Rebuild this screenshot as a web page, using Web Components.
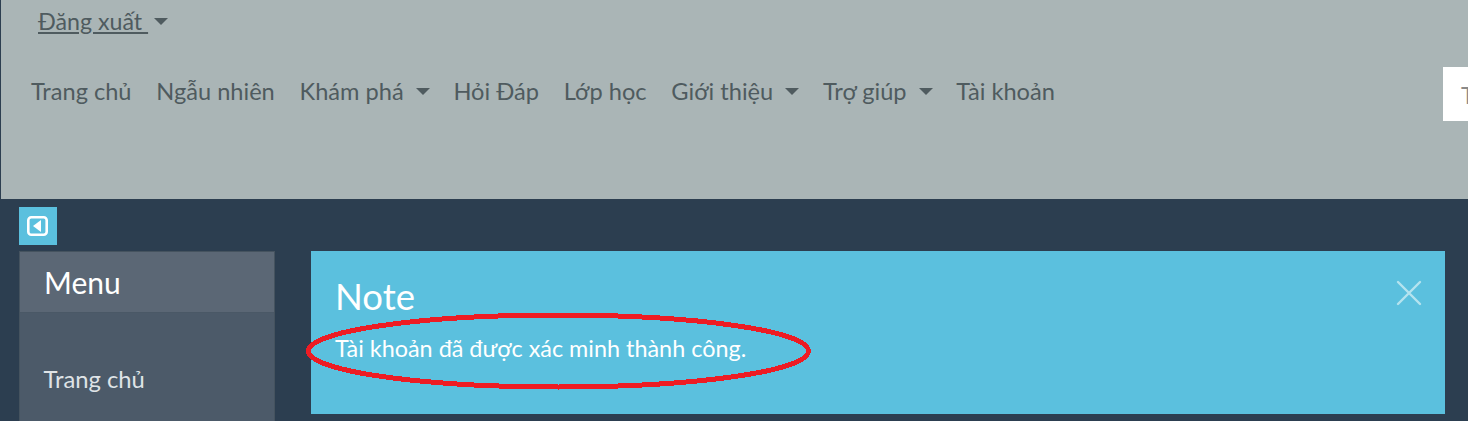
<!DOCTYPE html>
<html lang="vi">
<head>
<meta charset="utf-8">
<title>Note</title>
<style>
  html, body {
    margin: 0;
    height: 421px;
    overflow: hidden;
    background-color: #2c3e50;
    font-family: Lato, "Noto Sans", sans-serif;
  }
</style>
</head>
<body>
<site-header>
  <nav-link slot="top" caret underline>Đăng xuất </nav-link>
  <nav-link slot="nav">Trang chủ</nav-link>
  <nav-link slot="nav">Ngẫu nhiên</nav-link>
  <nav-link slot="nav" caret>Khám phá</nav-link>
  <nav-link slot="nav">Hỏi Đáp</nav-link>
  <nav-link slot="nav">Lớp học</nav-link>
  <nav-link slot="nav" caret>Giới thiệu</nav-link>
  <nav-link slot="nav" caret>Trợ giúp</nav-link>
  <nav-link slot="nav">Tài khoản</nav-link>
</site-header>
<page-body>
  <side-menu slot="side" heading="Menu">
    <span>Trang chủ</span>
  </side-menu>
  <note-box heading="Note">Tài khoản đã được xác minh thành công.</note-box>
</page-body>

<script>
  // Header with the logout row, the main nav and the clipped search box.
  customElements.define('site-header',
    class extends HTMLElement {
      constructor () {
        super()
        this.attachShadow({ mode: 'open' }).innerHTML = `
<style>
  :host {
    display: block;
    box-sizing: border-box;
    height: 199px;
    margin-left: 1px;
    background-color: #aab5b6;
    overflow: hidden;
  }
  .top {
    display: flex;
    align-items: flex-start;
    height: 67px;
    padding: 6px 0 0 37px;
    box-sizing: border-box;
  }
  .main {
    display: flex;
    justify-content: space-between;
    align-items: flex-start;
  }
  .nav {
    display: flex;
    gap: 24.8px;
    padding: 9px 0 0 30px;
  }
  .search {
    box-sizing: border-box;
    width: 25px;
    height: 54px;
    padding: 13px 0 0 18px;
    background-color: #fff;
    color: #8a8a8a;
    font-size: 23.6px;
    line-height: 30px;
    overflow: hidden;
    white-space: nowrap;
  }
</style>
<div class="top"><slot name="top"></slot></div>
<div class="main">
  <div class="nav"><slot name="nav"></slot></div>
  <div class="search">Tìm kiếm</div>
</div>`
      }
    }
  )

  // One nav entry, optionally with a dropdown caret.
  customElements.define('nav-link',
    class extends HTMLElement {
      constructor () {
        super()
        this.attachShadow({ mode: 'open' }).innerHTML = `
<style>
  :host {
    display: inline-flex;
    align-items: center;
    color: #4f5b5f;
    font-size: 23.6px;
    line-height: 30px;
    white-space: pre;
  }
  :host([underline]) {
    font-size: 23.2px;
  }
  :host([underline]) .label {
    text-decoration: underline;
  }
  .caret {
    display: none;
    width: 0;
    height: 0;
    margin: 0 -1px 0 12px;
    border-left: 7px solid transparent;
    border-right: 7px solid transparent;
    border-top: 7px solid #4f5b5f;
  }
  :host([caret]) .caret {
    display: block;
  }
  :host([underline]) .caret {
    margin-left: 6px;
  }
</style>
<span class="label"><slot></slot></span><span class="caret"></span>`
      }
    }
  )

  // Dark area below the header: toggle button, side menu and content.
  customElements.define('page-body',
    class extends HTMLElement {
      constructor () {
        super()
        this.attachShadow({ mode: 'open' }).innerHTML = `
<style>
  :host {
    display: block;
    position: relative;
    height: 222px;
    padding: 8px 23px 0 19px;
    box-sizing: border-box;
    overflow: hidden;
  }
  .toggle {
    display: flex;
    align-items: center;
    justify-content: center;
    width: 38px;
    height: 38px;
    margin-bottom: 6px;
    background-color: #5bc0de;
  }
  .row {
    display: grid;
    grid-template-columns: 256px 1fr;
    column-gap: 36px;
    align-items: start;
  }
  .mark {
    position: absolute;
    left: 304px;
    top: 112px;
    shape-rendering: crispEdges;
  }
</style>
<div class="toggle">
  <svg width="22" height="22" viewBox="0 0 22 22">
    <rect x="1.3" y="2.3" width="18.4" height="17.4" rx="3" fill="none" stroke="#fff" stroke-width="2.6"/>
    <path d="M14 5v12L6 11z" fill="#fff"/>
  </svg>
</div>
<div class="row">
  <slot name="side"></slot>
  <slot></slot>
</div>
<svg class="mark" width="510" height="80" viewBox="0 0 510 80">
  <ellipse cx="254.5" cy="40" rx="250" ry="36" fill="none" stroke="#ed1c24" stroke-width="5"/>
</svg>`
      }
    }
  )

  // Side panel with a heading strip.
  customElements.define('side-menu',
    class extends HTMLElement {
      constructor () {
        super()
        this.attachShadow({ mode: 'open' }).innerHTML = `
<style>
  :host {
    display: block;
    box-sizing: border-box;
    height: 300px;
    background-color: #4c5a69;
    border: 1px solid #45535f;
    color: #dfe3e6;
  }
  .head {
    box-sizing: border-box;
    height: 61px;
    padding: 12px 24px 0;
    background-color: #5b6775;
    border-bottom: 1px solid #4a5866;
    color: #fff;
    font-size: 30px;
    line-height: 36px;
  }
  .items {
    padding: 51px 23.5px 0;
    font-size: 23.8px;
    line-height: 30px;
  }
</style>
<div class="head"></div>
<div class="items"><slot></slot></div>`
        this.shadowRoot.querySelector('.head').textContent = this.getAttribute('heading')
      }
    }
  )

  // Dismissible note, the close cross is only drawn.
  customElements.define('note-box',
    class extends HTMLElement {
      constructor () {
        super()
        this.attachShadow({ mode: 'open' }).innerHTML = `
<style>
  :host {
    display: block;
    position: relative;
    box-sizing: border-box;
    height: 163px;
    padding: 22px 25px 0 24px;
    background-color: #5bc0de;
    color: #fff;
  }
  h2 {
    margin: 0;
    font-size: 36.5px;
    font-weight: 400;
    line-height: 46px;
  }
  p {
    margin: 14px 0 0;
    font-size: 23.4px;
    line-height: 30px;
  }
  svg {
    position: absolute;
    top: 29px;
    right: 23px;
  }
</style>
<h2></h2>
<p><slot></slot></p>
<svg width="26" height="26" viewBox="0 0 26 26">
  <path d="M2 2l22 22M24 2L2 24" stroke="#b5e3ef" stroke-width="2.4" stroke-linecap="round"/>
</svg>`
        this.shadowRoot.querySelector('h2').textContent = this.getAttribute('heading')
      }
    }
  )
</script>
</body>
</html>
